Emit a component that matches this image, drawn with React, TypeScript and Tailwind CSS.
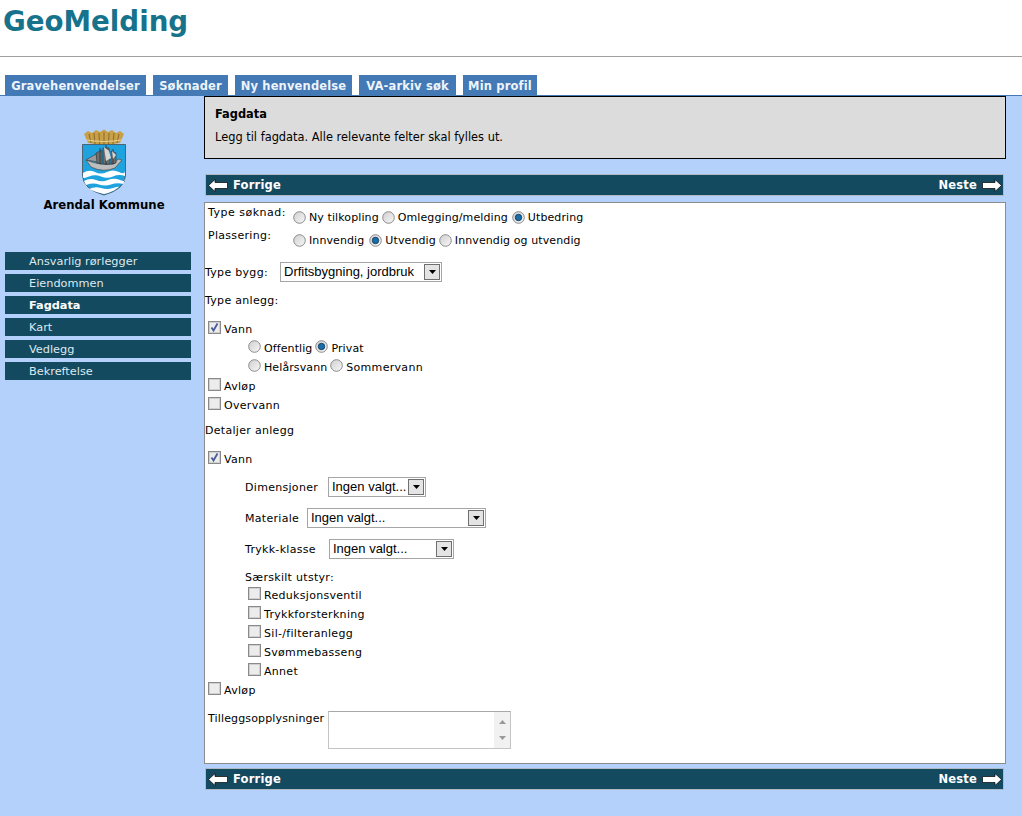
import React from 'react';

const tabs = [
  { label: 'Gravehenvendelser', width: 'w-[141px]' },
  { label: 'Søknader', width: 'w-[75px]' },
  { label: 'Ny henvendelse', width: 'w-[117px]' },
  { label: 'VA-arkiv søk', width: 'w-[97px]' },
  { label: 'Min profil', width: 'w-[74px]' },
];
const menu = ['Ansvarlig rørlegger', 'Eiendommen', 'Fagdata', 'Kart', 'Vedlegg', 'Bekreftelse'];

function Radio({ checked }: { checked?: boolean }) {
  return (
    <svg width="13" height="13" viewBox="0 0 13 13" className="shrink-0">
      <defs>
        <linearGradient id="rb" x1="0" y1="0" x2="1" y2="1">
          <stop offset="0" stopColor="#cfcfcf" />
          <stop offset="1" stopColor="#f8f8f8" />
        </linearGradient>
      </defs>
      <circle cx="6.5" cy="6.5" r="5.8" fill="url(#rb)" stroke="#8a8a8a" />
      {checked && <circle cx="6.5" cy="6.5" r="3.2" fill="#1c6ea8" stroke="#0b3a5e" strokeWidth="0.9" />}
    </svg>
  );
}

function Check({ checked }: { checked?: boolean }) {
  return (
    <svg width="13" height="13" viewBox="0 0 13 13" className="shrink-0">
      <rect x="0.5" y="0.5" width="12" height="12" fill="#e4e4e4" stroke="#8a8a8a" />
      <rect x="1.5" y="1.5" width="10" height="10" fill="#ececec" stroke="#cfcfcf" />
      {checked && <path d="M3.5 6.5 L5.5 9.5 L9.5 2.5" fill="none" stroke="#4a5a9a" strokeWidth="1.8" />}
    </svg>
  );
}

function Select({ value, width }: { value: string; width: string }) {
  return (
    <div className={`${width} h-[20px] border border-[#a5a5a5] bg-white flex items-center justify-between pl-[3px] pr-[1px] font-['Liberation_Sans',Arial,sans-serif] text-[13px] tracking-normal text-black`}>
      <span className="whitespace-nowrap overflow-hidden">{value}</span>
      <span className="w-[16px] h-[16px] shrink-0 bg-[#e4e4e4] border border-[#6f6f6f] flex items-center justify-center">
        <svg width="7" height="4" viewBox="0 0 7 4"><path d="M0 0H7L3.5 4Z" fill="#000" /></svg>
      </span>
    </div>
  );
}

function CheckRow({ label, checked }: { label: string; checked?: boolean }) {
  return (
    <div className="flex items-center h-[19px] pl-[3px] gap-[3px]">
      <Check checked={checked} />
      <span className="mt-[6px] tracking-[0.3px]">{label}</span>
    </div>
  );
}

function NavBar({ className = '' }: { className?: string }) {
  return (
    <div className={`ml-[1px] w-[799px] h-[22px] bg-[#134a60] border border-[#aeb9c2] flex items-center justify-between pl-[2px] pr-[1px] text-white font-bold text-[11.5px] tracking-[0.2px] ${className}`}>
      <span className="flex items-center gap-[5px]">
        <svg width="20" height="13" viewBox="0 0 20 13">
          <path d="M0.5 6.5 L7 0.5 V3.5 H19.5 V9.5 H7 V12.5 Z" fill="#fff" stroke="#000" strokeWidth="0.7" />
        </svg>
        <span className="mt-[2px]">Forrige</span>
      </span>
      <span className="flex items-center gap-[5px]">
        <span className="mt-[2px]">Neste</span>
        <svg width="20" height="13" viewBox="0 0 20 13">
          <path d="M19.5 6.5 L13 0.5 V3.5 H0.5 V9.5 H13 V12.5 Z" fill="#fff" stroke="#000" strokeWidth="0.7" />
        </svg>
      </span>
    </div>
  );
}

function CoatOfArms() {
  return (
    <svg width="46" height="67" viewBox="0 0 46 67">
      {/* krone */}
      <path d="M3 5 L7 2 L11 4 L15 1 L19 3 L23 0.5 L27 3 L31 1 L35 4 L39 2 L43 5 L39 14 Q23 17 7 14 Z" fill="#c8a048" />
      <path d="M8 5L10 14M13 4L14 15M18 4L18.500 15.500M23 3V15.500M28 4L27.500 15.500M33 4L32 15M38 5L36 14" stroke="#8a6a2a" strokeWidth="1" />
      <path d="M6 11 Q23 14 40 11" fill="none" stroke="#e4cd8a" strokeWidth="1.200" />
      {/* skjold */}
      <path d="M1.500 15.500 H44.500 V46 Q44.500 60 23 66 Q1.500 60 1.500 46 Z" fill="#1ea3df" stroke="#4f6472" />
      <path d="M2 44 Q8 40 14 43 T26 43 T38 43 T44 42 V47 Q38 45 32 47.500 T20 47.500 T8 47.500 T2 48 Z" fill="#fff" />
      <path d="M3 52 Q9 48.500 15 51 T27 51 T39 51 T43.500 50 L42.500 55 Q36 53.500 30 55.500 T18 55.500 T5 56 Z" fill="#fff" />
      <path d="M8 60 Q14 57 20 59 T32 59 T38 58 L33 61.500 Q28 64 23 65 Q14 63 8 60 Z" fill="#fff" />
      {/* skip */}
      <path d="M5 31 L10 38 Q22 44 34 39 L41 31 L37 30 L33 35 Q20 37 5 31 Z" fill="#bdbdbd" stroke="#4e4e4e" strokeWidth="0.7" />
      <path d="M5 31 L15 25 L17 33 Z" fill="#9a9a9a" stroke="#3a3a3a" strokeWidth="0.6" />
      <path d="M15 24 L21 21 V35 L16 34 Z M22 19 L28 19 L29 35 L22 35 Z M30 22 L35 24 L35 34 L30 35 Z" fill="#6f6f6f" stroke="#333" strokeWidth="0.6" />
      <path d="M25 16V36M19 19V35M32 20V35" stroke="#2c2c2c" strokeWidth="0.8" />
      <path d="M23 18 L28 22 L30 29 L25 32 Z M31 22 L35 26 L32 30 Z" fill="#d6d6d6" />
    </svg>
  );
}

export default function App() {
  return (
    <div className="min-h-[816px] bg-white font-['DejaVu_Sans',Verdana,sans-serif] text-[11px] text-black">
      <div className="h-[56px] border-b border-[#a0a0a0] box-content pl-[3px]">
        <h1 className="pt-[2px] text-[27.7px] leading-[40px] font-bold text-[#17738b]">GeoMelding</h1>
      </div>
      <div className="flex gap-[7px] pl-[5px] mt-[18px] h-[20px]">
        {tabs.map((t) => (
          <div key={t.label} className={`${t.width} h-[20px] pt-[3px] text-center bg-[#4379b5] text-[#eef4fb] font-bold text-[11.5px] leading-[16px] tracking-[0.15px] whitespace-nowrap`}>
            {t.label}
          </div>
        ))}
      </div>
      <div className="flex border-t border-[#4379b5] bg-[#b3d1fb] h-[721px]">
        <aside className="w-[204px] shrink-0 pl-[5px]">
          <div className="w-[198px] flex flex-col items-center pt-[33px]">
            <CoatOfArms />
            <div className="mt-[2px] font-bold text-[11.7px] leading-[14px]">Arendal Kommune</div>
          </div>
          <nav className="mt-[40px] flex flex-col gap-[4px] w-[186px]">
            {menu.map((m) => (
              <div key={m} className={`h-[18px] bg-[#134a60] pl-[24px] leading-[20px] text-[11.3px] whitespace-nowrap ${m === 'Fagdata' ? 'font-bold text-white' : 'text-[#dfe9ee]'}`}>
                {m}
              </div>
            ))}
          </nav>
        </aside>
        <main className="w-[802px] shrink-0">
          <div className="h-[63px] border border-black bg-[#dcdcdc] pl-[10px] pt-[9px] text-[11.4px]">
            <div className="font-bold leading-[16px]">Fagdata</div>
            <div className="mt-[7px] leading-[16px]">Legg til fagdata. Alle relevante felter skal fylles ut.</div>
          </div>
          <NavBar className="mt-[15px]" />
          <div className="mt-[6px] h-[562px] border border-[#8c8c8c] bg-white tracking-[0.3px]">
            <div className="flex items-start pl-[3px] pt-[2px] h-[25px]">
              <span className="w-[85px] leading-[16px] tracking-[0.5px]">Type søknad:</span>
              <span className="flex items-center mt-[3px] gap-[2px] tracking-[0.1px]">
                <Radio /><span className="ml-[1px] mr-[1px] mt-[2px]">Ny tilkopling</span>
                <Radio /><span className="ml-[1px] mr-[2px] mt-[2px]">Omlegging/melding</span>
                <Radio checked /><span className="ml-[1px] mt-[2px]">Utbedring</span>
              </span>
            </div>
            <div className="flex items-start pl-[3px] h-[22px]">
              <span className="w-[85px] leading-[16px]">Plassering:</span>
              <span className="flex items-center mt-[3px] gap-[2px] tracking-[0.1px]">
                <Radio /><span className="ml-[1px] mr-[3px] mt-[2px]">Innvendig</span>
                <Radio checked /><span className="ml-[1px] mr-[1px] mt-[2px]">Utvendig</span>
                <Radio /><span className="ml-[1px] mt-[2px]">Innvendig og utvendig</span>
              </span>
            </div>
            <div className="flex items-center mt-[12px] h-[20px]">
              <span className="w-[75px] mt-[2px]">Type bygg:</span>
              <Select value="Drfitsbygning, jordbruk" width="w-[162px]" />
            </div>
            <div className="mt-[11px] h-[16px] leading-[16px]">Type anlegg:</div>
            <div className="mt-[9px]"><CheckRow label="Vann" checked /></div>
            <div className="flex items-center h-[19px] pl-[43px] gap-[3px] tracking-[0.1px]">
              <Radio /><span className="mt-[6px]">Offentlig</span><Radio checked /><span className="mt-[6px]">Privat</span>
            </div>
            <div className="flex items-center h-[19px] pl-[43px] gap-[3px] tracking-[0.1px]">
              <Radio /><span className="mt-[6px]">Helårsvann</span><Radio /><span className="mt-[6px] tracking-[0.3px]">Sommervann</span>
            </div>
            <CheckRow label="Avløp" />
            <CheckRow label="Overvann" />
            <div className="mt-[10px] h-[16px] leading-[16px]">Detaljer anlegg</div>
            <div className="mt-[9px]"><CheckRow label="Vann" checked /></div>
            <div className="pl-[40px]">
              <div className="flex items-center mt-[10px] h-[20px]">
                <span className="w-[83px] mt-[3px]">Dimensjoner</span><Select value="Ingen valgt..." width="w-[98px]" />
              </div>
              <div className="flex items-center mt-[11px] h-[20px]">
                <span className="w-[62px] mt-[3px]">Materiale</span><Select value="Ingen valgt..." width="w-[179px]" />
              </div>
              <div className="flex items-center mt-[11px] h-[20px]">
                <span className="w-[84px] mt-[3px]">Trykk-klasse</span><Select value="Ingen valgt..." width="w-[125px]" />
              </div>
              <div className="mt-[11px] h-[14px] leading-[16px]">Særskilt utstyr:</div>
              {['Reduksjonsventil', 'Trykkforsterkning', 'Sil-/filteranlegg', 'Svømmebasseng', 'Annet'].map((s) => (
                <CheckRow key={s} label={s} />
              ))}
            </div>
            <CheckRow label="Avløp" />
            <div className="flex items-start mt-[13px] pl-[3px]">
              <span className="w-[120px] leading-[14px] mt-[1px] tracking-[0.15px]">Tilleggsopplysninger</span>
              <div className="w-[183px] h-[38px] border border-[#c4c4c4] border-t-[#a8a8a8] bg-white flex justify-end">
                <div className="w-[16px] h-full bg-[#f1f1f1] flex flex-col items-center justify-between py-[8px]">
                  <svg width="7" height="4" viewBox="0 0 7 4"><path d="M0 4H7L3.5 0Z" fill="#9a9a9a" /></svg>
                  <svg width="7" height="4" viewBox="0 0 7 4"><path d="M0 0H7L3.5 4Z" fill="#9a9a9a" /></svg>
                </div>
              </div>
            </div>
          </div>
          <NavBar className="mt-[4px]" />
        </main>
      </div>
    </div>
  );
}
